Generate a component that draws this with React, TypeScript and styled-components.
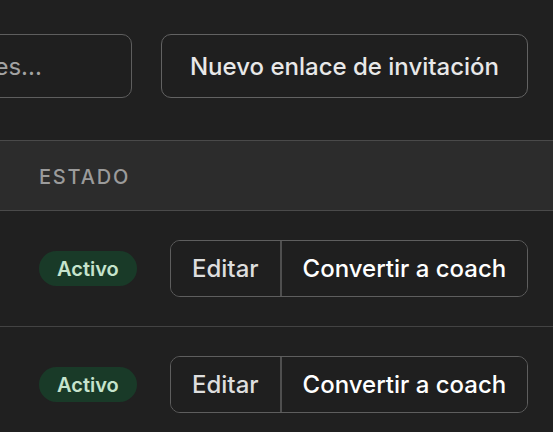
import React from "react";
import styled, { createGlobalStyle } from "styled-components";

const Global = createGlobalStyle`
  html, body { margin: 0; padding: 0; background: #202020; }
  body { font-family: Inter, "Noto Sans", "Liberation Sans", sans-serif; -webkit-font-smoothing: antialiased; }
  * { box-sizing: border-box; }
`;

const Page = styled.div`
  width: 553px;
  height: 432px;
  overflow: hidden;
  background: #202020;
`;

const Toolbar = styled.div`
  display: flex;
  justify-content: flex-end;
  align-items: center;
  gap: 29px;
  padding: 34px 25px 0 0;
  height: 98px;
  margin-bottom: 42px;
`;

const SearchInput = styled.input`
  flex: 0 0 auto;
  width: 310px;
  height: 64px;
  padding: 0 16px;
  background: #1f1f1f;
  border: 1px solid #5e5e5e;
  border-radius: 10px;
  font-family: inherit;
  font-size: 24px;
  color: #e6e6e6;
  outline: none;
  &::placeholder { color: #a3a3a3; }
`;

const PrimaryButton = styled.button`
  flex: 0 0 auto;
  height: 64px;
  padding: 0 28px;
  background: #1f1f1f;
  border: 1px solid #626262;
  border-radius: 10px;
  font-family: inherit;
  font-size: 24px;
  font-weight: 500;
  color: #e8e8e8;
`;

const Table = styled.div`
  display: grid;
  grid-template-columns: 170px 1fr;
`;

const HeaderCell = styled.div`
  height: 71px;
  display: flex;
  align-items: center;
  padding-left: 39px;
  padding-top: 2px;
  background: #2c2c2c;
  border-top: 1px solid #4a4a4a;
  border-bottom: 1px solid #4a4a4a;
  font-size: 20px;
  font-weight: 500;
  letter-spacing: 1.8px;
  color: #9b9b9b;
`;

const Cell = styled.div<{ $pad?: number }>`
  height: 116px;
  display: flex;
  align-items: center;
  padding-left: ${(p) => p.$pad ?? 0}px;
  border-bottom: 1px solid #434343;
`;

const Badge = styled.span`
  display: inline-flex;
  align-items: center;
  height: 35px;
  padding: 0 18px;
  border-radius: 18px;
  background: #193a28;
  color: #c6e4cd;
  font-size: 20px;
  font-weight: 600;
`;

const ButtonGroup = styled.div`
  display: inline-flex;
  height: 57px;
  border: 1px solid #5e5e5e;
  border-radius: 10px;
  overflow: hidden;
`;

const GroupButton = styled.button<{ $bright?: boolean }>`
  height: 100%;
  padding: 0 21px;
  background: #1f1f1f;
  border: none;
  font-family: inherit;
  font-size: 24px;
  font-weight: 500;
  color: ${(p) => (p.$bright ? "#ffffff" : "#dedede")};
  & + & { border-left: 2px solid #4f4f4f; }
`;

const rows = [1, 2];

export default function App() {
  return (
    <Page>
      <Global />
      <Toolbar>
        <SearchInput placeholder="Buscar coaches..." />
        <PrimaryButton>Nuevo enlace de invitación</PrimaryButton>
      </Toolbar>
      <Table>
        <HeaderCell>ESTADO</HeaderCell>
        <HeaderCell />
        {rows.map((r) => (
          <React.Fragment key={r}>
            <Cell $pad={39}>
              <Badge>Activo</Badge>
            </Cell>
            <Cell>
              <ButtonGroup>
                <GroupButton>Editar</GroupButton>
                <GroupButton $bright>Convertir a coach</GroupButton>
              </ButtonGroup>
            </Cell>
          </React.Fragment>
        ))}
      </Table>
    </Page>
  );
}
